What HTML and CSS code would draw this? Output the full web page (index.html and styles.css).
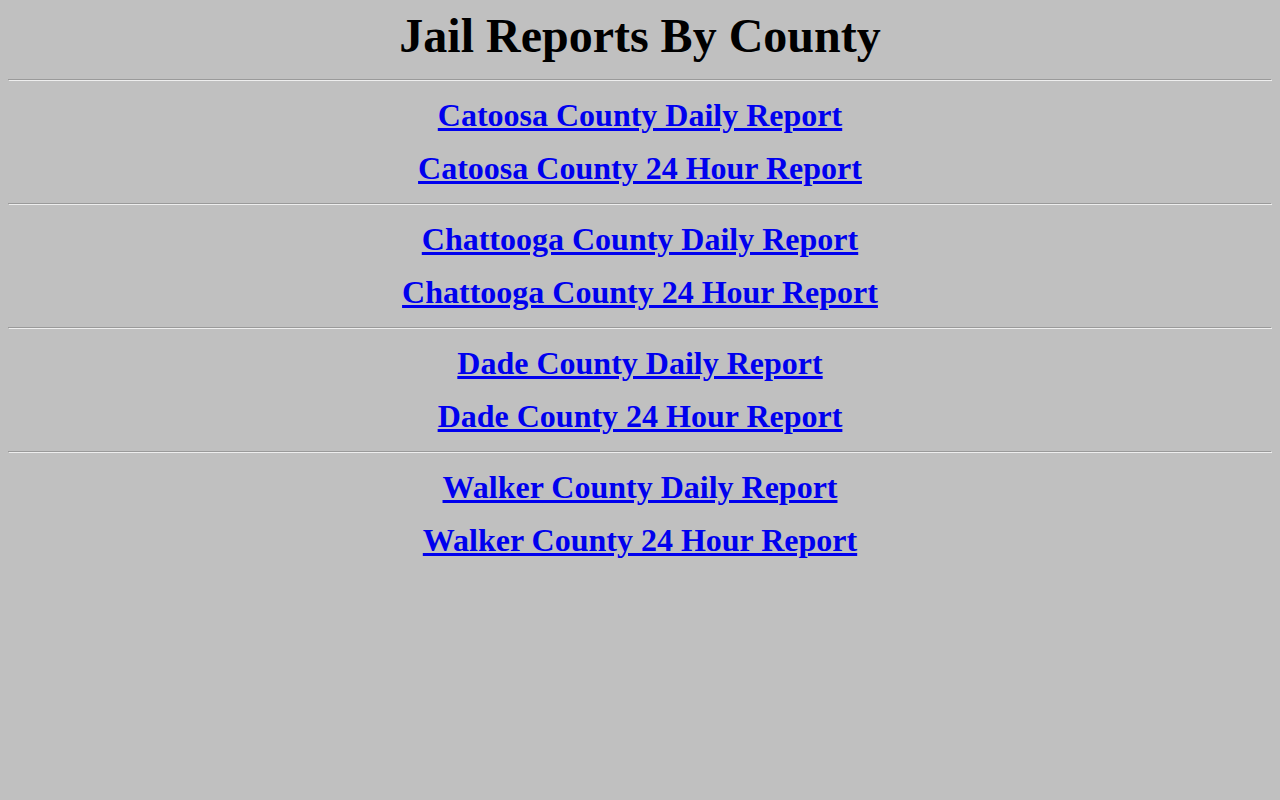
FILE: index.html
```html
<!doctype html>
<html lang="en">
<head>
    <meta charset="UTF-8">
    <title>Jail Reports By County</title>
    <link rel="stylesheet" href="styles.css">
</head>
<body>
<div class="title">Jail Reports By County</div>
<hr>
<p class="report"><a href="#">Catoosa County Daily Report</a></p>
<p class="report"><a href="#">Catoosa County 24 Hour Report</a></p>
<hr>
<p class="report"><a href="#">Chattooga County Daily Report</a></p>
<p class="report"><a href="#">Chattooga County 24 Hour Report</a></p>
<hr>
<p class="report"><a href="#">Dade County Daily Report</a></p>
<p class="report"><a href="#">Dade County 24 Hour Report</a></p>
<hr>
<p class="report"><a href="#">Walker County Daily Report</a></p>
<p class="report"><a href="#">Walker County 24 Hour Report</a></p>
</body>
</html>
```

FILE: styles.css
```css
body{
    margin: 8px;
    background: #c0c0c0;
    font-family: "Liberation Serif", "Times New Roman", serif;
}
.title{
    margin: 0 0 16px;
    text-align: center;
    font-size: 48px;
    font-weight: bold;
    color: #000;
}
hr{
    margin: 8px 0;
}
.report{
    margin: 16px 0;
    text-align: center;
    font-size: 32px;
    font-weight: bold;
}
.report a{
    color: #0000ee;
}
```
